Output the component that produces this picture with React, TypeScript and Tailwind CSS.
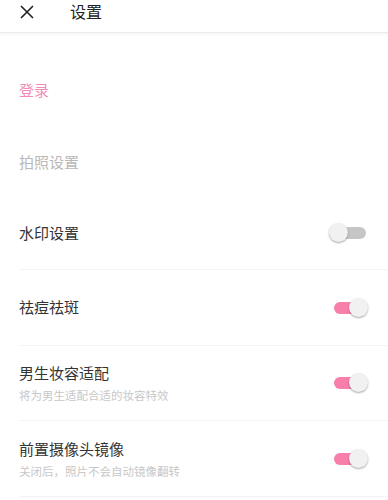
import React from "react";

function Toggle({ on }: { on: boolean }) {
  return (
    <div className="relative h-[20px] w-[38px]">
      <div
        className={
          on
            ? "absolute left-[4px] top-[4px] h-[12px] w-[30px] rounded-full bg-[#f87fab]"
            : "absolute left-[1px] top-[4px] h-[12px] w-[36px] rounded-full bg-[#c6c6c6]"
        }
      />
      <div
        className={
          on
            ? "absolute left-[19px] top-0 h-[19px] w-[19px] rounded-full bg-[#f1f1f1] shadow-[0_1px_2px_rgba(0,0,0,0.35)]"
            : "absolute left-0 top-0 h-[19px] w-[19px] rounded-full bg-[#f1f1f1] shadow-[0_1px_2px_rgba(0,0,0,0.35)]"
        }
      />
    </div>
  );
}

export default function App() {
  const font = { fontFamily: '"Noto Sans CJK SC", "Noto Sans", sans-serif' };

  return (
    <div className="h-[500px] w-[388px] overflow-hidden bg-white" style={font}>
      {/* 顶部栏 */}
      <div className="relative flex h-[33px] items-center border-b border-[#ececec] shadow-[0_1px_3px_rgba(0,0,0,0.06)]">
        <svg width="14" height="14" viewBox="0 0 14 14" className="ml-[20px] mt-[-9px]">
          <path d="M1 1 L13 13 M13 1 L1 13" stroke="#222" strokeWidth="1.6" />
        </svg>
        <span className="ml-[36px] mt-[-11px] text-[16px] leading-none text-[#222]">设置</span>
      </div>

      <div className="pt-[21px]">
        <div className="flex h-[72px] items-center pl-[19px] text-[15px] text-[#f08cb8]">登录</div>
        <div className="flex h-[72px] items-center pl-[19px] text-[15px] text-[#b9b9b9]">拍照设置</div>

        <div className="ml-[19px] flex h-[72px] items-center justify-between border-b border-[#f3f3f3] pr-[21px]">
          <span className="text-[15px] text-[#333]">水印设置</span>
          <div className="mt-[-1px]">
            <Toggle on={false} />
          </div>
        </div>

        <div className="ml-[19px] flex h-[76px] items-center justify-between border-b border-[#f3f3f3] pr-[20px]">
          <span className="text-[15px] text-[#333]">祛痘祛斑</span>
          <Toggle on={true} />
        </div>

        <div className="ml-[19px] flex h-[75px] items-center justify-between border-b border-[#f3f3f3] pr-[20px]">
          <div className="flex flex-col">
            <span className="text-[15px] leading-[20px] text-[#333]">男生妆容适配</span>
            <span className="mt-[4px] text-[11.5px] leading-[16px] text-[#c8c8c8]">将为男生适配合适的妆容特效</span>
          </div>
          <Toggle on={true} />
        </div>

        <div className="ml-[19px] flex h-[76px] items-center justify-between border-b border-[#f3f3f3] pr-[20px]">
          <div className="flex flex-col">
            <span className="text-[15px] leading-[20px] text-[#333]">前置摄像头镜像</span>
            <span className="mt-[4px] text-[11.5px] leading-[16px] text-[#c8c8c8]">关闭后，照片不会自动镜像翻转</span>
          </div>
          <Toggle on={true} />
        </div>
      </div>
    </div>
  );
}
